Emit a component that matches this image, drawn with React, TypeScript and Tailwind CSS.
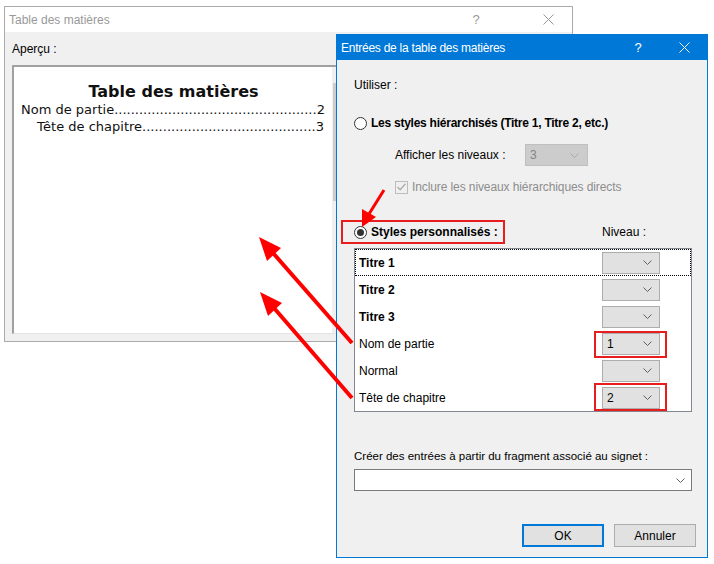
import React from 'react';

const Chevron = ({ color = '#606060' }: { color?: string }) => (
  <svg width="9" height="5" viewBox="0 0 9 5" className="shrink-0">
    <polyline points="0.5,0.5 4.5,4.5 8.5,0.5" fill="none" stroke={color} strokeWidth="1" />
  </svg>
);

const CloseX = ({ color }: { color: string }) => (
  <svg width="11" height="11" viewBox="0 0 11 11">
    <line x1="0.5" y1="0.5" x2="10.5" y2="10.5" stroke={color} strokeWidth="1" />
    <line x1="10.5" y1="0.5" x2="0.5" y2="10.5" stroke={color} strokeWidth="1" />
  </svg>
);

const Radio = ({ checked }: { checked?: boolean }) => (
  <span className="w-[13px] h-[13px] rounded-full border border-[#333333] bg-white flex items-center justify-center shrink-0">
    {checked && <span className="w-[7px] h-[7px] rounded-full bg-[#333333]" />}
  </span>
);

const LevelSelect = ({ value }: { value?: string }) => (
  <div className="w-[58px] h-[22px] bg-[#e1e1e1] border border-[#adadad] flex items-center pl-[4px] pr-[7px]">
    <span className="flex-1 text-[12px] text-black">{value}</span>
    <Chevron />
  </div>
);

const rows = [
  { label: 'Titre 1', bold: true, level: '' },
  { label: 'Titre 2', bold: true, level: '' },
  { label: 'Titre 3', bold: true, level: '' },
  { label: 'Nom de partie', bold: false, level: '1' },
  { label: 'Normal', bold: false, level: '' },
  { label: 'Tête de chapitre', bold: false, level: '2' },
];

// points de conduite de la page d'aperçu
const leader1 = '.'.repeat(49);
const leader2 = '.'.repeat(42);

export default function App() {
  return (
    <div className="relative w-[714px] h-[564px] bg-white overflow-hidden font-['Liberation_Sans',Arial,sans-serif] text-[12px] text-black">
      {/* fenêtre arrière */}
      <div className="absolute left-[4px] top-[6px] w-[569px] h-[336px] border border-[#aaaaaa] bg-[#f0f0f0] flex flex-col">
        <div className="h-[25px] bg-white flex items-center pl-[4px] text-[#999999]">
          <span>Table des matières</span>
          <span className="ml-auto w-[20px] text-center text-[13px]">?</span>
          <span className="ml-[57px] mr-[18px] flex"><CloseX color="#9a9a9a" /></span>
        </div>
        <div className="pl-[7px]">
          <div className="mt-[9px] h-[16px] leading-[16px]">Aperçu :</div>
          <div className="mt-[8px] w-[340px] h-[269px] border-t-2 border-l-2 border-t-[#a0a0a0] border-l-[#a0a0a0] border-b border-r border-b-[#e3e3e3] border-r-[#e3e3e3] bg-white flex">
            <div className="w-[318px] pt-[16px] pl-[7px] pr-[8px] font-['DejaVu_Sans',Verdana,sans-serif] text-[#111111]">
              <div className="text-center font-bold text-[16px] leading-[18px] pl-[2px]">Table des matières</div>
              <div className="flex justify-between text-[13px] leading-[17px] whitespace-nowrap">
                <span>Nom de partie{leader1}</span>
                <span>2</span>
              </div>
              <div className="flex justify-between text-[13px] leading-[17px] whitespace-nowrap pl-[16px]">
                <span>Tête de chapitre{leader2}</span>
                <span>3</span>
              </div>
            </div>
            <div className="w-[17px] bg-[#f0f0f0] pt-[16px]">
              <div className="ml-[1px] w-[15px] h-[118px] bg-[#cdcdcd]" />
            </div>
          </div>
        </div>
      </div>

      {/* fenêtre avant */}
      <div className="absolute left-[336px] top-[34px] w-[372px] h-[524px] border border-[#0078d7] bg-[#f0f0f0] flex flex-col">
        <div className="h-[25px] bg-[#0078d7] text-white flex items-center pl-[4px] shrink-0">
          <span className="tracking-[-0.25px]">Entrées de la table des matières</span>
          <span className="ml-auto w-[20px] text-center text-[13px]">?</span>
          <span className="ml-[31px] mr-[17px] flex"><CloseX color="#ffffff" /></span>
        </div>
        <div className="pl-[17px] flex flex-col">
          <div className="mt-[17px] h-[16px] leading-[16px]">Utiliser :</div>
          <div className="mt-[22px] h-[16px] flex items-center gap-[4px]">
            <Radio />
            <span className="font-bold tracking-[-0.25px]">Les styles hiérarchisés (Titre 1, Titre 2, etc.)</span>
          </div>
          <div className="mt-[13px] h-[22px] flex items-center pl-[41px]">
            <span className="w-[130px]">Afficher les niveaux :</span>
            <div className="w-[63px] h-[22px] bg-[#cccccc] border border-[#bfbfbf] flex items-center pl-[4px] pr-[8px]">
              <span className="flex-1 text-[#838383]">3</span>
              <Chevron color="#a8a8a8" />
            </div>
          </div>
          <div className="mt-[13px] h-[16px] flex items-center pl-[41px] gap-[4px] text-[#8d8d8d]">
            <span className="w-[13px] h-[13px] border border-[#bcbcbc] bg-[#f0f0f0] flex items-center justify-center">
              <svg width="9" height="8" viewBox="0 0 9 8">
                <polyline points="0.5,4 3.2,6.8 8.5,0.8" fill="none" stroke="#aaaaaa" strokeWidth="1.3" />
              </svg>
            </span>
            <span className="tracking-[-0.1px]">Inclure les niveaux hiérarchiques directs</span>
          </div>
          <div className="mt-[25px] h-[24px] flex items-center">
            <div className="w-[248px] flex items-center gap-[4px]">
              <Radio checked />
              <span className="font-bold">Styles personnalisés :</span>
            </div>
            <span>Niveau :</span>
          </div>
          <div className="mt-[4px] w-[338px] h-[164px] border border-[#828790] bg-white">
            {rows.map((r, i) => (
              <div
                key={r.label}
                className={`h-[27px] flex items-center pl-[3px] ${i === 0 ? 'border border-dotted border-black' : 'border border-transparent'}`}
              >
                <span className={`w-[243px] ${r.bold ? 'font-bold' : ''}`}>{r.label}</span>
                <LevelSelect value={r.level} />
              </div>
            ))}
          </div>
          <div className="mt-[36px] h-[16px] leading-[16px] text-[11.5px]">Créer des entrées à partir du fragment associé au signet :</div>
          <div className="mt-[5px] w-[338px] h-[22px] bg-white border border-[#7a7a7a] flex items-center justify-end pr-[6px]">
            <Chevron />
          </div>
          <div className="mt-[33px] flex justify-end gap-[10px] pr-[11px]">
            <button className="w-[82px] h-[23px] bg-[#e1e1e1] border-2 border-[#0078d7]">OK</button>
            <button className="w-[82px] h-[23px] bg-[#e1e1e1] border border-[#adadad]">Annuler</button>
          </div>
        </div>
      </div>

      {/* annotations */}
      <div className="absolute left-[341px] top-[220px] w-[164px] h-[24px] border-2 border-[#e81e1e]" />
      <div className="absolute left-[594px] top-[331px] w-[73px] h-[27px] border-2 border-[#e81e1e]" />
      <div className="absolute left-[594px] top-[383px] w-[73px] h-[28px] border-2 border-[#e81e1e]" />
      <svg className="absolute left-0 top-0" width="714" height="564" viewBox="0 0 714 564">
        <line x1="352" y1="343" x2="273" y2="253" stroke="#ff0000" strokeWidth="4" />
        <polygon points="259,237 281,248 267,261" fill="#ff0000" />
        <line x1="352" y1="398" x2="274" y2="308" stroke="#ff0000" strokeWidth="4" />
        <polygon points="260,292 282,303 268,316" fill="#ff0000" />
        <line x1="384" y1="190" x2="369" y2="214" stroke="#ff0000" strokeWidth="3" />
        <polygon points="362,227 376,217 362,209" fill="#ff0000" />
      </svg>
    </div>
  );
}
